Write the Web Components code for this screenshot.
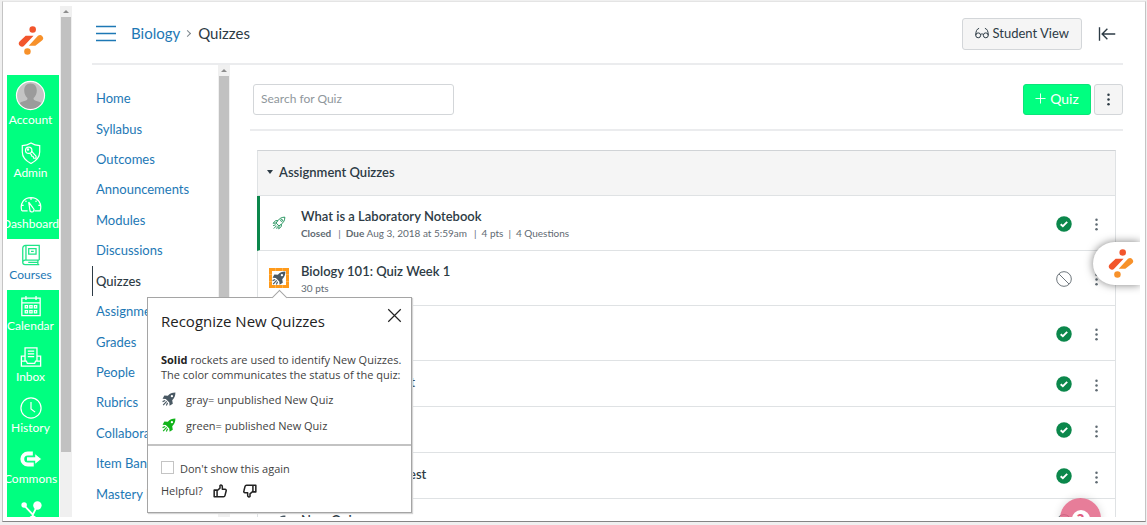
<!DOCTYPE html>
<html lang="en">
<head>
<meta charset="UTF-8">
<meta name="viewport" content="width=device-width, initial-scale=1">
<title>Biology: Quizzes</title>
<style>
:root {
    --brand: #00ff80;
    --link: #1d78b5;
    --ink: #2d3b45;
    --muted: #5f6a72;
    --line: #dfe2e4;
    --published: #0b874b;
}
body {
    margin: 0;
    background: #fff;
    color: var(--ink);
    font-family: Lato, "Liberation Sans", sans-serif;
    font-size: 13px;
}
</style>
</head>
<body>
<quizzes-page></quizzes-page>

<script>
const icons = {
  logo: `<circle cx="18" cy="4" r="3.7" fill="#f2552c"/><path d="M15 11H10L3.300 17.300A3.600 3.600 0 0 0 8.500 22.300L19 11Z" fill="#f2552c"/><path d="M13.500 22.500H21L28.600 16.500A3.500 3.500 0 0 0 24 11.200Z" fill="#f7912a"/><circle cx="12" cy="29" r="3.700" fill="#f7912a"/>`,
  avatar: `<circle cx="16" cy="16" r="14.500" fill="#c4c4c4"/><path d="M16 3.500c-4.500 0-6.500 3.200-6.500 7.500 0 3.500 1.600 5.800 3.300 7.500.3 2-.5 2.500-3 3.300-2.300.7-4.500 1.200-5.500 3A14.500 14.500 0 0 0 27.700 24.800c-1-1.800-3.200-2.300-5.500-3-2.500-.8-3.300-1.300-3-3.300 1.700-1.700 3.300-4 3.300-7.500 0-4.300-2-7.500-6.500-7.500z" fill="#9b9b9b"/><circle cx="16" cy="16" r="14.500" fill="none" stroke="currentColor" stroke-width="1.200"/>`,
  admin: `<g fill="none" stroke="currentColor" stroke-width="1.300"><path d="M12 1c3 2 6 2.800 9.500 3v7c0 6-3.500 9.500-9.500 12.500C6 20.500 2.500 17 2.500 11V4C6 3.800 9 3 12 1z"/><circle cx="9.500" cy="9" r="3.500"/><circle cx="8.700" cy="8.300" r=".7"/><path d="M12.300 9.700l5.200 5.800v2.200h-2.600l-.6-2-1.600-.4-.4-1.600-1.800-1.300"/></g>`,
  dashboard: `<g fill="none" stroke="currentColor" stroke-width="1.300"><path d="M2 19.500C-.5 11 4.500 5 12 5S24.500 11 22 19.500h-6.300M2 19.500h6.300M4 13.500H1.500M20 13.500h2.500M6 8.500l1 1M18 8.500l-1 1M12 5v2.500"/><path d="M9.500 10l4.800 6.500a2.300 2.300 0 1 1-3.600 1.500z"/></g>`,
  courses: `<g fill="none" stroke="currentColor" stroke-width="1.400"><path d="M21 17.500V1.500H6a3 3 0 0 0-3 3V20a2.500 2.500 0 0 0 2.500 2.500H21M21 17.500H5.500a2.500 2.500 0 0 0 0 5M19.500 17.500v5M6.500 1.500v16M9 20H19"/><path d="M9.500 5h8v6h-8zM12 8h3"/></g>`,
  calendar: `<g fill="none" stroke="currentColor" stroke-width="1.400"><path d="M2 3.500h20v19H2zM2 8.500h20M6.500 1v4.500M17.500 1v4.500"/><path d="M5.700 11.500h2.500V14H5.700zM10.700 11.500h2.500V14h-2.500zM15.700 11.500h2.500V14h-2.500zM5.700 17h2.500v2.500H5.700zM10.700 17h2.500v2.500h-2.500zM15.700 17h2.500v2.500h-2.500z"/></g>`,
  inbox: `<g fill="none" stroke="currentColor" stroke-width="1.400"><path d="M5.500 16V2h13v14M8.500 5.500h7M8.500 8.500h7M8.500 11.500h7M5.500 11H1.500v11h21V11h-4M1.500 16.500h5.500l1 2.500h8l1-2.500h5.500"/></g>`,
  history: `<g fill="none" stroke="currentColor" stroke-width="1.300"><circle cx="12" cy="12" r="11"/><path d="M12 5.500V13l4.500 3.500"/></g>`,
  commons: `<path d="M14 6H8.500a6 6 0 0 0 0 12H15" fill="none" stroke="currentColor" stroke-width="4.200"/><path d="M7 9.500h9V5.500L24 12l-8 6.500v-4H7z" fill="currentColor" stroke="var(--brand)" stroke-width="1.200"/>`,
  studio: `<path d="M4 6.500l10 10.500v4M19.500 6L14 17" fill="none" stroke="currentColor" stroke-width="2"/><circle cx="4.500" cy="6.500" r="3" fill="currentColor"/><circle cx="19" cy="7" r="4.600" fill="currentColor"/><circle cx="14" cy="22" r="4" fill="currentColor"/>`,
  menu: `<path d="M2 4.500h20M2 11.500h20M2 18.500h20" stroke="currentColor" stroke-width="1.400"/>`,
  glasses: `<g fill="none" stroke="currentColor" stroke-width="1.700"><circle cx="5.500" cy="16" r="4.200"/><circle cx="18.500" cy="16" r="4.200"/><path d="M1.300 16C1.300 9 3 5 7 4M22.700 16C22.700 9 21 5 17 4M9.500 15c1.500-2 3.500-2 5 0"/></g>`,
  collapse: `<path d="M2 3v18M23 12H6M12.500 5L5.500 12l7 7" fill="none" stroke="currentColor" stroke-width="1.800"/>`,
  plus: `<path d="M12 1v22M1 12h22" stroke="currentColor" stroke-width="2"/>`,
  more: `<g fill="currentColor"><circle cx="12" cy="4.500" r="2"/><circle cx="12" cy="12" r="2"/><circle cx="12" cy="19.500" r="2"/></g>`,
  rocket: `<g fill="none" stroke="currentColor" stroke-width="1.500"><path d="M22 2c-5 0-9 2-12 6L7 12l5 5 4-3c4-3 6-7 6-12z"/><circle cx="16.500" cy="7.500" r="1.700"/><path d="M10 8H6l-4 4.500 5-.5M16 14v4l-4.500 4 .5-5M6.500 15L2 16.500M8 16.500L3 21.500M9.500 18L8 22"/></g>`,
  rocketSolid: `<path fill="currentColor" fill-rule="evenodd" d="M23 1C17 1 13.500 2.500 10 6.500L4 6 1 11.500l5.500.5 6 6 .5 5.500L18.500 20l-1-6C21.500 10.500 23 7 23 1zM17 5.200a2 2 0 1 1 0 4 2 2 0 0 1 0-4z"/><path d="M5.500 14.500L1 16.500M8 16L2 22.500M9.500 18.500L7.500 23" stroke="currentColor" stroke-width="2" fill="none"/>`,
  published: `<circle cx="12" cy="12" r="11.600" fill="#0b874b"/><path d="M7 12.300l3.300 3 6.500-6.500" fill="none" stroke="#fff" stroke-width="2.800"/>`,
  unpublished: `<g fill="none" stroke="#6f777d" stroke-width="1.500"><circle cx="12" cy="12" r="11"/><path d="M4.500 4.500l15 15"/></g>`,
  close: `<path d="M2 2l20 20M22 2L2 22" stroke="currentColor" stroke-width="1.900"/>`,
  thumb: `<path d="M2 10.500h5V22H2zM7 11.500L12 7V2.500c1.500-1.300 4-.5 4 2V9h4.500c2 0 2.500 1.500 2 3l-2 8c-.4 1.500-1.200 2-2.500 2H7" fill="none" stroke="currentColor" stroke-width="2.600" stroke-linejoin="round"/>`,
};

class UiIcon extends HTMLElement {
  connectedCallback() {
    const size = this.getAttribute("size") || 24;
    const box = { logo: "0 0 31 33", avatar: "0 0 32 32" };
    const name = this.getAttribute("name");
    this.attachShadow({ mode: "open" }).innerHTML = `
<style>
:host { display: inline-flex; flex: none; }
svg { display: block; }
</style>
<svg width="${size}" height="${size}" viewBox="${box[name] || "0 0 24 24"}" aria-hidden="true">${icons[name]}</svg>`;
  }
}

class ScrollTrack extends HTMLElement {
  connectedCallback() {
    this.attachShadow({ mode: "open" }).innerHTML = `
<style>
:host {
    display: flex;
    flex-direction: column;
    align-items: center;
    width: 12px;
    background: #f0f0f0;
}
.arrow {
    height: 11px;
    display: flex;
    align-items: center;
}
.arrow::before {
    content: "";
    border: 3px solid transparent;
    border-top: 0;
    border-bottom-color: #8d8d8d;
}
.thumb {
    width: 10px;
    height: var(--thumb, 80%);
    background: #c1c1c1;
}
</style>
<div class="arrow"></div>
<div class="thumb"></div>`;
  }
}

class GlobalNav extends HTMLElement {
  connectedCallback() {
    const items = ["Account", "Admin", "Dashboard", "Courses", "Calendar", "Inbox", "History", "Commons"];
    const links = items.map((label) => {
      const name = label === "Account" ? "avatar" : label.toLowerCase();
      const cls = label === "Account" ? "account" : label === "Courses" ? "active" : "";
      return `<a href="#${label.toLowerCase()}" class="${cls}"><ui-icon name="${name}" size="${label === "Account" ? 31 : 22}"></ui-icon><span>${label}</span></a>`;
    }).join("");
    this.attachShadow({ mode: "open" }).innerHTML = `
<style>
:host {
    display: flex;
    flex-direction: column;
    width: 52px;
    overflow: hidden;
}
.logo {
    flex: none;
    height: 69px;
    display: flex;
    align-items: center;
    justify-content: center;
    padding-right: 6px;
    box-sizing: border-box;
}
nav {
    flex: 1;
    background: var(--brand);
}
nav a {
    display: flex;
    flex-direction: column;
    align-items: center;
    gap: 1px;
    height: 51px;
    padding: 5px 5px 0 0;
    box-sizing: border-box;
    color: #fff;
    font-size: 12px;
    line-height: 16px;
    text-decoration: none;
}
nav a.account {
    height: 62px;
}
nav a.active {
    background: #fff;
    color: var(--link);
}
nav a.active ui-icon {
    color: #1fe588;
}
</style>
<div class="logo"><ui-icon name="logo" size="29"></ui-icon></div>
<nav aria-label="Global">${links}<a href="#studio" aria-label="Studio"><ui-icon name="studio" size="22"></ui-icon></a></nav>`;
  }
}

class CourseHeader extends HTMLElement {
  connectedCallback() {
    this.attachShadow({ mode: "open" }).innerHTML = `
<style>
:host {
    display: flex;
    align-items: center;
    height: 57px;
    padding-bottom: 4px;
    border-bottom: 2px solid #ebecee;
    box-sizing: border-box;
}
button {
    display: flex;
    align-items: center;
    justify-content: center;
    padding: 0;
    border: 0;
    background: none;
    color: var(--ink);
    font: inherit;
}
.menu {
    color: var(--link);
    margin: 0 13px 0 2px;
}
.crumbs {
    flex: 1;
    display: flex;
    align-items: center;
    gap: 5px;
    padding-bottom: 1px;
    font-size: 15px;
    line-height: 20px;
}
.crumbs a {
    color: var(--link);
    text-decoration: none;
}
.crumbs i {
    width: 4px;
    height: 4px;
    margin-right: 3px;
    border: 1px solid #7d868c;
    border-width: 1px 1px 0 0;
    transform: rotate(45deg);
}
.student {
    height: 32px;
    gap: 4px;
    padding: 0 12px 1px;
    border: 1px solid #d3d6d9;
    border-radius: 3px;
    background: #f5f5f5;
}
.collapse {
    margin: 0 7px 0 16px;
}
</style>
<button class="menu" aria-label="Course menu"><ui-icon name="menu" size="24"></ui-icon></button>
<nav class="crumbs" aria-label="Breadcrumb"><a href="#biology">Biology</a><i></i><span>Quizzes</span></nav>
<button class="student"><ui-icon name="glasses" size="14"></ui-icon>Student View</button>
<button class="collapse" aria-label="Collapse"><ui-icon name="collapse" size="18"></ui-icon></button>`;
  }
}

class CourseNav extends HTMLElement {
  connectedCallback() {
    const items = ["Home", "Syllabus", "Outcomes", "Announcements", "Modules", "Discussions", "Quizzes", "Assignments", "Grades", "People", "Rubrics", "Collaborations", "Item Banks", "Mastery Paths"];
    const links = items.map((label) =>
      `<a href="#${label.toLowerCase().replace(" ", "-")}"${label === "Quizzes" ? ' class="active" aria-current="page"' : ""}>${label}</a>`
    ).join("");
    this.attachShadow({ mode: "open" }).innerHTML = `
<style>
:host {
    display: block;
    width: 126px;
    overflow: hidden;
}
nav {
    display: grid;
    grid-auto-rows: minmax(30px, 1fr);
    height: 100%;
    padding: 18px 0 8px;
    box-sizing: border-box;
}
a {
    display: flex;
    align-items: center;
    padding-left: 3px;
    border-left: 1px solid transparent;
    color: var(--link);
    text-decoration: none;
    white-space: nowrap;
}
a.active {
    border-color: var(--ink);
    color: var(--ink);
    font-weight: 500;
}
</style>
<nav aria-label="Course">${links}</nav>`;
  }
}

class QuizToolbar extends HTMLElement {
  connectedCallback() {
    this.attachShadow({ mode: "open" }).innerHTML = `
<style>
:host {
    display: flex;
    gap: 3px;
    padding: 19px 0 14px 3px;
    border-bottom: 2px solid #ebecee;
}
input, button {
    height: 31px;
    box-sizing: border-box;
    border: 1px solid #d3d6d9;
    border-radius: 3px;
    font: inherit;
}
input {
    width: 201px;
    margin-right: auto;
    padding: 0 7px 2px;
    font-size: 12px;
    color: var(--ink);
}
input::placeholder {
    color: #8f979c;
}
button {
    display: flex;
    align-items: center;
    justify-content: center;
    gap: 4px;
    padding: 0 0 2px;
    background: #f5f5f5;
    color: var(--ink);
}
.add {
    width: 68px;
    border-color: #0be57a;
    background: var(--brand);
    color: #fff;
    font-size: 14px;
}
.more {
    width: 29px;
    padding: 0;
}
</style>
<input type="text" placeholder="Search for Quiz" aria-label="Search for Quiz">
<button class="add"><ui-icon name="plus" size="11"></ui-icon>Quiz</button>
<button class="more" aria-label="More options"><ui-icon name="more" size="15"></ui-icon></button>`;
  }
}

class QuizGroup extends HTMLElement {
  connectedCallback() {
    this.attachShadow({ mode: "open" }).innerHTML = `
<style>
:host {
    display: block;
    margin: 19px 7px 0;
    border: 1px solid var(--line);
    border-top-color: #d0d3d6;
}
button {
    display: flex;
    align-items: center;
    gap: 6px;
    width: 100%;
    height: 45px;
    padding: 0 9px 2px;
    border: 0;
    border-bottom: 1px solid var(--line);
    background: #f5f5f5;
    color: var(--ink);
    font: 600 13px/20px Lato, sans-serif;
}
button::before {
    content: "";
    border: 3px solid transparent;
    border-top: 4px solid var(--ink);
    border-bottom: 0;
}
</style>
<button aria-expanded="true">${this.getAttribute("label")}</button>
<slot></slot>`;
  }
}

class QuizRow extends HTMLElement {
  connectedCallback() {
    const published = this.hasAttribute("published");
    const icon = this.hasAttribute("classic") ? "rocket" : "rocketSolid";
    const title = this.getAttribute("title-text");
    this.attachShadow({ mode: "open" }).innerHTML = `
<style>
:host {
    display: flex;
    align-items: center;
    height: 55px;
    padding-right: 11px;
    box-sizing: border-box;
    border-bottom: 1px solid var(--line);
}
:host([compact]) {
    height: 46px;
}
:host([bar]) {
    margin-left: -1px;
    border-left: 3px solid var(--published);
}
.icon {
    position: relative;
    display: flex;
    align-items: center;
    justify-content: center;
    width: 20px;
    height: 20px;
    margin: 0 12px 0 11px;
    color: ${published ? "var(--published)" : "#4a5964"};
}
:host([bar]) .icon {
    margin-left: 9px;
}
:host([highlight]) .icon {
    background: #fff;
    outline: 3px dashed #ff9a1a;
    outline-offset: -3px;
    box-shadow: inset 0 0 0 3px #ffb14d;
}
.text {
    flex: 1;
}
:host([compact]) .text {
    padding-bottom: 3px;
}
.title {
    display: block;
    color: var(--ink);
    font-size: 13px;
    font-weight: 600;
    line-height: 20px;
    text-decoration: none;
}
.meta {
    display: flex;
    color: var(--muted);
    font-size: 10px;
    line-height: 14px;
}
.status {
    padding-top: 1px;
}
.kebab {
    display: flex;
    padding: 3px 0 0;
    margin-left: 17px;
    border: 0;
    background: none;
    color: var(--muted);
}
</style>
<div class="icon"><ui-icon name="${icon}" size="14"></ui-icon><slot name="tip"></slot></div>
<div class="text">
  ${title ? `<a class="title" href="#quiz">${title}</a>` : ""}
  <div class="meta"><slot></slot></div>
</div>
<ui-icon class="status" name="${published ? "published" : "unpublished"}" size="16"></ui-icon>
<button class="kebab" aria-label="Quiz options"><ui-icon name="more" size="15"></ui-icon></button>`;
  }
}

class TipCard extends HTMLElement {
  connectedCallback() {
    this.attachShadow({ mode: "open" }).innerHTML = `
<style>
:host {
    position: absolute;
    top: 29px;
    left: -122px;
    z-index: 5;
    display: block;
    width: 265px;
    box-sizing: border-box;
    border: 1px solid #a5a5a5;
    background: #fff;
    box-shadow: 1px 1px 1px #d5d5d5;
    color: #3f3f3f;
    font-family: "Open Sans", "Noto Sans", sans-serif;
    font-size: 11px;
    line-height: 15px;
}
:host::before {
    content: "";
    position: absolute;
    top: -6px;
    left: 126px;
    width: 10px;
    height: 10px;
    border: 1px solid #a5a5a5;
    border-width: 1px 0 0 1px;
    background: #fff;
    transform: rotate(45deg);
}
.main {
    padding: 8px 13px 6px;
    border-bottom: 2px solid #c3c3c3;
}
.head {
    display: flex;
    justify-content: space-between;
    align-items: center;
    height: 30px;
}
h2 {
    margin: 0;
    color: #222;
    font-size: 15px;
    font-weight: 500;
    line-height: 20px;
}
button {
    display: flex;
    padding: 0;
    border: 0;
    background: none;
    color: #222;
}
.head button {
    margin: -12px -4px 0 0;
}
p {
    margin: 16px 0 4px;
    white-space: nowrap;
}
b {
    color: #222;
}
ul {
    list-style: none;
    margin: 0;
    padding: 0;
}
li {
    display: flex;
    align-items: center;
    gap: 10px;
    height: 26px;
    padding-left: 1px;
}
.foot {
    padding: 13px 13px 9px;
}
label {
    display: flex;
    align-items: center;
    gap: 6px;
    height: 19px;
}
input {
    appearance: none;
    width: 13px;
    height: 13px;
    margin: 0 0 3px;
    border: 1px solid #c4c4c4;
    background: #fff;
}
.helpful {
    display: flex;
    align-items: center;
    gap: 10px;
    height: 25px;
}
.down {
    margin-left: 6px;
    transform: rotate(180deg);
}
</style>
<div class="main">
  <div class="head"><h2>Recognize New Quizzes</h2><button aria-label="Close"><ui-icon name="close" size="15"></ui-icon></button></div>
  <p><b>Solid</b> rockets are used to identify New Quizzes.<br>The color communicates the status of the quiz:</p>
  <ul>
    <li><ui-icon name="rocketSolid" size="14" style="color: #4a5964"></ui-icon>gray= unpublished New Quiz</li>
    <li><ui-icon name="rocketSolid" size="14" style="color: #12b31b"></ui-icon>green= published New Quiz</li>
  </ul>
</div>
<div class="foot">
  <label><input type="checkbox">Don't show this again</label>
  <div class="helpful">Helpful?
    <button aria-label="Yes"><ui-icon name="thumb" size="14"></ui-icon></button>
    <button class="down" aria-label="No"><ui-icon name="thumb" size="14"></ui-icon></button>
  </div>
</div>`;
  }
}

class QuizzesPage extends HTMLElement {
  connectedCallback() {
    this.attachShadow({ mode: "open" }).innerHTML = `
<style>
:host {
    display: block;
    height: 100vh;
    padding: 1px 1px 3px 2px;
    box-sizing: border-box;
    background: #f0f0f0;
    overflow: hidden;
}
.frame {
    height: 100%;
    padding: 4px 5px 4px 4px;
    box-sizing: border-box;
    border: 1px solid #c4c4c4;
    border-top-color: #e4e4e4;
    border-bottom-color: #858585;
    background: #fff;
}
.app {
    position: relative;
    display: flex;
    gap: 1px;
    height: 100%;
    overflow: hidden;
}
.main {
    flex: 1;
    display: flex;
    flex-direction: column;
    min-width: 0;
    padding: 2px 17px 0 19px;
}
.columns {
    flex: 1;
    display: flex;
    min-height: 0;
}
.content {
    flex: 1;
    min-width: 0;
    padding-left: 20px;
}
global-nav + scroll-track {
    --thumb: 435px;
}
course-nav + scroll-track {
    --thumb: 300px;
}
.sep {
    margin: 0 5px 0 7px;
}
.sep.near {
    margin-left: 5px;
}
.quick {
    position: absolute;
    top: 236px;
    right: 0;
    display: flex;
    align-items: center;
    width: 47px;
    height: 43px;
    padding: 0 0 0 13px;
    box-sizing: border-box;
    border: 0;
    border-radius: 22px 0 0 22px;
    background: #fff;
    box-shadow: 0 0 8px rgba(0, 0, 0, .5);
}
.help {
    position: absolute;
    right: 39px;
    bottom: -22px;
    display: flex;
    align-items: center;
    justify-content: center;
    width: 41px;
    height: 41px;
    padding: 0;
    border: 0;
    border-radius: 50%;
    background: rgba(225, 93, 127, .8);
    box-shadow: 0 0 8px rgba(0, 0, 0, .15);
}
.help span {
    width: 18px;
    height: 18px;
    border-radius: 50%;
    background: #fff;
    color: #e15d7f;
    font: 900 16px/19px Lato, sans-serif;
}
</style>
<div class="frame">
  <div class="app">
    <global-nav></global-nav>
    <scroll-track></scroll-track>
    <div class="main">
      <course-header></course-header>
      <div class="columns">
        <course-nav></course-nav>
        <scroll-track></scroll-track>
        <div class="content">
          <quiz-toolbar></quiz-toolbar>
          <quiz-group label="Assignment Quizzes">
            <quiz-row title-text="What is a Laboratory Notebook" classic published bar>
              <b>Closed</b><span class="sep">|</span><span><b>Due</b> Aug 3, 2018 at 5:59am</span><span class="sep">|</span><span>4 pts</span><span class="sep near">|</span><span>4 Questions</span>
            </quiz-row>
            <quiz-row title-text="Biology 101: Quiz Week 1" highlight>
              <tip-card slot="tip"></tip-card>
              30 pts
            </quiz-row>
            <quiz-row published></quiz-row>
            <quiz-row title-text="Photosynthesis Test" published compact></quiz-row>
            <quiz-row published compact></quiz-row>
            <quiz-row title-text="Photosynthesis A Test" published compact></quiz-row>
            <quiz-row title-text="New Quiz" compact></quiz-row>
          </quiz-group>
        </div>
      </div>
    </div>
    <button class="quick" aria-label="Quick links"><ui-icon name="logo" size="29"></ui-icon></button>
    <button class="help" aria-label="Help"><span>?</span></button>
  </div>
</div>`;
  }
}

customElements.define("ui-icon", UiIcon);
customElements.define("scroll-track", ScrollTrack);
customElements.define("global-nav", GlobalNav);
customElements.define("course-header", CourseHeader);
customElements.define("course-nav", CourseNav);
customElements.define("quiz-toolbar", QuizToolbar);
customElements.define("quiz-group", QuizGroup);
customElements.define("quiz-row", QuizRow);
customElements.define("tip-card", TipCard);
customElements.define("quizzes-page", QuizzesPage);
</script>
</body>
</html>
